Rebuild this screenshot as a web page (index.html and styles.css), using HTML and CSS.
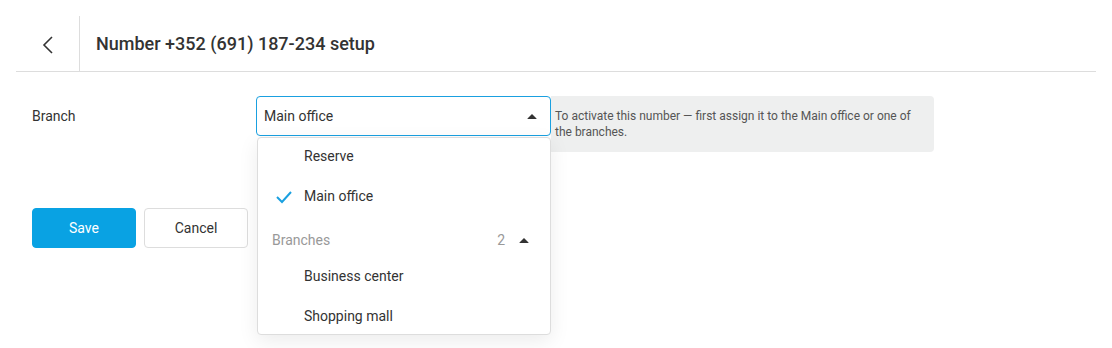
FILE: index.html
```html
<!DOCTYPE html>
<html>
<head>
<meta charset="utf-8">
<link rel="stylesheet" href="styles.css">
</head>
<body>
<div class="page">
  <header class="header">
    <div class="back">
      <svg width="12" height="18" viewBox="0 0 12 18"><path d="M10 1 L2 9 L10 17" fill="none" stroke="#333" stroke-width="1.6"/></svg>
    </div>
    <h1 class="title">Number +352 (691) 187-234 setup</h1>
  </header>
  <div class="form">
    <div class="row">
      <div class="label">Branch</div>
      <div class="field">
        <div class="select">
          <span>Main office</span>
          <span class="tri"></span>
        </div>
        <div class="menu">
          <div class="item">Reserve</div>
          <div class="item checked">
            <svg class="check" width="16" height="14" viewBox="0 0 16 14"><path d="M1 7 L6 12 L15 2" fill="none" stroke="#1aa0e0" stroke-width="2"/></svg>
            Main office
          </div>
          <div class="group"><span>Branches</span><span class="count">2</span><span class="tri small"></span></div>
          <div class="item">Business center</div>
          <div class="item last">Shopping mall</div>
        </div>
      </div>
      <div class="hint">To activate this number — first assign it to the Main office or one of the branches.</div>
    </div>
    <div class="actions">
      <button class="btn primary">Save</button>
      <button class="btn">Cancel</button>
    </div>
  </div>
</div>
</body>
</html>
```
FILE: styles.css
```css
* { box-sizing: border-box; }
html, body { min-height: 348px; }
body { margin: 0; background: #fff; font-family: Roboto, "Noto Sans", sans-serif; color: #333; }
.page { padding: 16px 16px 0; min-height: 348px; }
.header { display: flex; align-items: stretch; height: 56px; border-bottom: 1px solid #ddd; }
.back { width: 64px; border-right: 1px solid #ddd; display: flex; align-items: center; justify-content: center; padding-top: 2px; }
.title { margin: 0; font-size: 18px; font-weight: 500; line-height: 56px; padding-left: 16px; color: #333; }
.form { padding: 24px 16px 0; }
.row { display: flex; align-items: flex-start; height: 112px; }
.label { width: 224px; font-size: 14px; line-height: 40px; }
.field { position: relative; width: 295px; }
.select { height: 40px; border: 1px solid #1aa0e0; border-radius: 4px; display: flex; align-items: center; justify-content: space-between; padding: 0 13px 0 7px; font-size: 14px; background: #fff; position: relative; z-index: 2; }
.tri { width: 0; height: 0; border-left: 5px solid transparent; border-right: 5px solid transparent; border-bottom: 5px solid #333; border-radius: 1px; }
.menu { position: absolute; top: 41px; left: 1px; width: 294px; background: #fff; border: 1px solid #ddd; border-radius: 4px; box-shadow: 0 6px 20px rgba(0,0,0,0.08); z-index: 3; font-size: 14px; }
.item { position: relative; height: 40px; line-height: 37px; padding-left: 46px; }
.item.last { height: 36px; }
.check { position: absolute; left: 18px; top: 12px; }
.group { display: flex; align-items: center; height: 40px; padding: 4px 21px 0 14px; color: #999; }
.group span:first-child { flex: 1; }
.count { margin-right: 14px; }
.hint { width: 383px; height: 56px; background: #eeefef; border-radius: 0 4px 4px 0; font-size: 12px; line-height: 16px; padding: 12px 16px 0 4px; color: #555; }
.actions { display: flex; gap: 8px; }
.btn { width: 104px; height: 40px; border-radius: 4px; border: 1px solid #ddd; background: #fff; font-family: inherit; font-size: 14px; font-weight: 400; color: #333; }
.btn.primary { background: #09a2e3; border-color: #09a2e3; color: #fff; }
```
